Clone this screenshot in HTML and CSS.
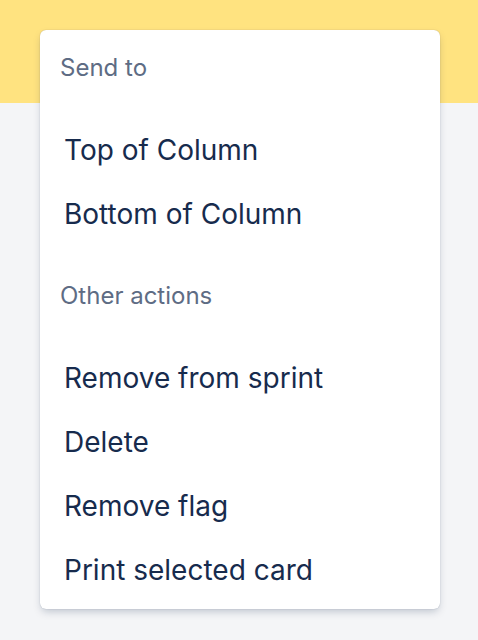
FILE: index.html
```html
<!DOCTYPE html>
<html lang="en">
<head>
<meta charset="utf-8">
<title>Card actions</title>
<link rel="stylesheet" href="styles.css">
</head>
<body>
<div class="page">
  <div class="banner"></div>
  <div class="board"></div>
  <div class="menu" role="menu">
    <div class="group">
      <div class="group-title">Send to</div>
      <div class="item">Top of Column</div>
      <div class="item">Bottom of Column</div>
    </div>
    <div class="group">
      <div class="group-title">Other actions</div>
      <div class="item">Remove from sprint</div>
      <div class="item">Delete</div>
      <div class="item">Remove flag</div>
      <div class="item">Print selected card</div>
    </div>
  </div>
</div>
</body>
</html>
```
FILE: styles.css
```css
html, body {
  margin: 0;
  padding: 0;
  height: 100%;
}
body {
  font-family: Inter, "Noto Sans", "Liberation Sans", sans-serif;
  background: #f4f5f7;
}
.page {
  position: relative;
  height: 640px;
  overflow: hidden;
}
.banner {
  height: 103px;
  background: #ffe380;
}
.board {
  height: 537px;
  background: #f4f5f7;
}
.menu {
  position: absolute;
  top: 30px;
  left: 40px;
  width: 400px;
  box-sizing: border-box;
  background: #ffffff;
  border-radius: 6px;
  box-shadow: 0 4px 8px -2px rgba(9, 30, 66, 0.25), 0 0 1px rgba(9, 30, 66, 0.31);
  padding: 24px 0 7px;
}
.group + .group {
  margin-top: 36px;
}
.group-title {
  height: 28px;
  line-height: 28px;
  font-size: 24px;
  color: #5e6c84;
  padding-left: 20px;
  margin-bottom: 36px;
}
.item {
  height: 64px;
  line-height: 64px;
  font-size: 28px;
  color: #172b4d;
  padding-left: 24px;
  white-space: nowrap;
}
```
